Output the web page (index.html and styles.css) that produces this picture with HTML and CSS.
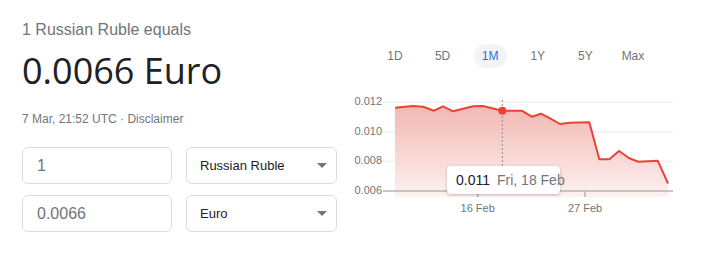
FILE: index.html
```html
<!DOCTYPE html>
<html lang="en">
<head>
    <meta charset="UTF-8">
    <meta name="viewport" content="width=device-width, initial-scale=1.0">
    <title>Currency Converter</title>
    <link rel="stylesheet" href="styles.css">
</head>

<body>
    <div class="converter">
        <!-- Left side: rate and inputs -->
        <div class="rate-panel">
            <div class="intro">1 Russian Ruble equals</div>
            <div class="rate">0.0066 Euro</div>
            <div class="updated">7 Mar, 21:52 UTC · <span class="disclaimer">Disclaimer</span></div>

            <div class="fields">
                <input class="amount" type="text" value="1">
                <div class="currency">
                    <span>Russian Ruble</span>
                    <span class="caret"></span>
                </div>
                <input class="amount" type="text" value="0.0066">
                <div class="currency">
                    <span>Euro</span>
                    <span class="caret"></span>
                </div>
            </div>
        </div>

        <!-- Right side: range tabs and chart -->
        <div class="chart-panel">
            <div class="tabs">
                <div class="tab">1D</div>
                <div class="tab">5D</div>
                <div class="tab active">1M</div>
                <div class="tab">1Y</div>
                <div class="tab">5Y</div>
                <div class="tab">Max</div>
            </div>

            <svg class="chart" width="340" height="125" viewBox="340 90 340 125">
                <defs>
                    <linearGradient id="area" x1="0" y1="0" x2="0" y2="1">
                        <stop offset="0" stop-color="#f2b8b3"/>
                        <stop offset="1" stop-color="#fdf1f0"/>
                    </linearGradient>
                </defs>

                <!-- grid -->
                <g class="grid">
                    <line x1="383" y1="102" x2="673" y2="102"/>
                    <line x1="383" y1="131.7" x2="673" y2="131.7"/>
                    <line x1="383" y1="161.3" x2="673" y2="161.3"/>
                </g>

                <path class="area" d="M395 107.7 L413 106 L423 106.7 L434 110.7 L443 106.3 L453 111.3 L463 108.7 L473 106.3 L483 106 L502.3 110.7 L521.7 110.7 L531.7 116.7 L541 113.7 L550 118.3 L560 124 L570 122.7 L589.3 122.3 L599.3 159.3 L609.3 159.3 L619 151 L629.3 158.3 L638.3 161.7 L657.7 160.7 L668 183.5 L668 197 L395 197 Z"/>

                <line class="axis" x1="383" y1="191" x2="673" y2="191"/>
                <line class="axis" x1="477.7" y1="191" x2="477.7" y2="197"/>
                <line class="axis" x1="585" y1="191" x2="585" y2="197"/>

                <line class="cursor" x1="502.3" y1="100" x2="502.3" y2="166"/>

                <path class="trend" d="M395 107.7 L413 106 L423 106.7 L434 110.7 L443 106.3 L453 111.3 L463 108.7 L473 106.3 L483 106 L502.3 110.7 L521.7 110.7 L531.7 116.7 L541 113.7 L550 118.3 L560 124 L570 122.7 L589.3 122.3 L599.3 159.3 L609.3 159.3 L619 151 L629.3 158.3 L638.3 161.7 L657.7 160.7 L668 183.5"/>
                <circle class="dot" cx="502.3" cy="110.7" r="4"/>

                <g class="y-labels">
                    <text x="382" y="102">0.012</text>
                    <text x="382" y="131.7">0.010</text>
                    <text x="382" y="161.3">0.008</text>
                    <text x="382" y="191">0.006</text>
                </g>
                <g class="x-labels">
                    <text x="477.7" y="209">16 Feb</text>
                    <text x="585" y="209">27 Feb</text>
                </g>
            </svg>

            <div class="tooltip">
                <span class="tip-value">0.011</span>
                <span class="tip-date">Fri, 18 Feb</span>
            </div>
        </div>
    </div>
</body>
</html>
```

FILE: styles.css
```css
/* Page basics */
body {
    margin: 0;
    background: #ffffff;
    font-family: 'Liberation Sans', Arial, sans-serif;
    color: #202124;
}

.converter {
    display: flex;
    align-items: flex-start;
    padding-left: 22px;
}

/* Left column */
.rate-panel {
    width: 315px;
    padding-top: 20px;
}

.intro {
    font-size: 16px;
    line-height: 20px;
    color: #70757a;
}

.rate {
    margin-top: 9px;
    font-family: 'Open Sans', Roboto, sans-serif;
    font-size: 36px;
    line-height: 44px;
    color: #202124;
}

.updated {
    margin-top: 18px;
    font-size: 12px;
    line-height: 16px;
    color: #70757a;
}

.fields {
    display: grid;
    grid-template-columns: 150px 151px;
    grid-auto-rows: 37px;
    column-gap: 14px;
    row-gap: 11px;
    margin-top: 20px;
}

.amount {
    box-sizing: border-box;
    width: 100%;
    height: 100%;
    margin: 0;
    padding: 0 14px;
    border: 1px solid #dadce0;
    border-radius: 6px;
    font-family: 'Liberation Sans', Arial, sans-serif;
    font-size: 16px;
    color: #70757a;
    outline: none;
}

.currency {
    box-sizing: border-box;
    display: flex;
    align-items: center;
    justify-content: space-between;
    padding: 0 9px 0 13px;
    border: 1px solid #dadce0;
    border-radius: 6px;
    font-size: 13px;
    color: #202124;
}

.caret {
    width: 0;
    height: 0;
    border-left: 5px solid transparent;
    border-right: 5px solid transparent;
    border-top: 5px solid #757575;
}

/* Right column */
.chart-panel {
    position: relative;
    width: 340px;
    margin-left: 3px;
    padding-top: 44px;
}

.tabs {
    display: flex;
    gap: 14.6px;
    margin-left: 38.5px;
}

.tab {
    width: 33px;
    height: 24px;
    border-radius: 12px;
    font-size: 12px;
    line-height: 24px;
    text-align: center;
    color: #70757a;
}

.tab.active {
    background: #f3f4f7;
    color: #1a73e8;
}

.chart {
    display: block;
    margin-top: 22px;
}

.grid line {
    stroke: #f1f1f1;
    stroke-width: 1.5;
}

.area {
    fill: url(#area);
}

.axis {
    stroke: #b4b4b4;
    stroke-width: 1.5;
}

.cursor {
    stroke: #8a8a8a;
    stroke-width: 1;
    stroke-dasharray: 2 2;
}

.trend {
    fill: none;
    stroke: #ea4335;
    stroke-width: 2;
    stroke-linejoin: round;
}

.dot {
    fill: #ea4335;
}

.y-labels text {
    font-family: 'Liberation Sans', Arial, sans-serif;
    font-size: 11px;
    fill: #70757a;
    text-anchor: end;
    dominant-baseline: middle;
}

.x-labels text {
    font-family: 'Liberation Sans', Arial, sans-serif;
    font-size: 11px;
    fill: #70757a;
    text-anchor: middle;
    dominant-baseline: middle;
}

/* Tooltip over the chart */
.tooltip {
    position: absolute;
    left: 107px;
    top: 166px;
    box-sizing: border-box;
    width: 113px;
    height: 28px;
    padding-left: 9px;
    display: flex;
    align-items: center;
    gap: 7px;
    background: #ffffff;
    border-radius: 4px;
    box-shadow: 0 1px 3px rgba(0, 0, 0, 0.25);
    font-size: 14px;
    white-space: nowrap;
}

.tip-value {
    color: #202124;
}

.tip-date {
    color: #70757a;
}
```
